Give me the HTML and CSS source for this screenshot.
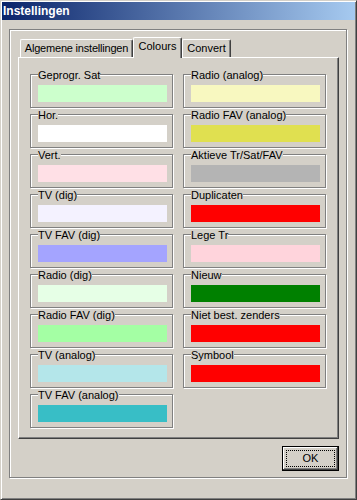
FILE: index.html
```html
<!DOCTYPE html>
<html lang="nl">
  <head>
    <link rel="stylesheet" href="styles.css">
  </head>
  <body>
    <div class="window">
      <div class="titlebar">Instellingen</div>
      <div class="client">
        <div class="frame">
          <div class="tabs">
            <div class="tab tab-general">Algemene instellingen</div>
            <div class="tab tab-colours active">Colours</div>
            <div class="tab tab-convert">Convert</div>
          </div>

          <div class="page">
            <div class="column">
              <div class="group"><span class="caption">Geprogr. Sat</span><div class="swatch sat"></div></div>
              <div class="group"><span class="caption">Hor.</span><div class="swatch hor"></div></div>
              <div class="group"><span class="caption">Vert.</span><div class="swatch vert"></div></div>
              <div class="group"><span class="caption">TV (dig)</span><div class="swatch tv-dig"></div></div>
              <div class="group"><span class="caption">TV FAV (dig)</span><div class="swatch tv-fav-dig"></div></div>
              <div class="group"><span class="caption">Radio (dig)</span><div class="swatch radio-dig"></div></div>
              <div class="group"><span class="caption">Radio FAV (dig)</span><div class="swatch radio-fav-dig"></div></div>
              <div class="group"><span class="caption">TV (analog)</span><div class="swatch tv-analog"></div></div>
              <div class="group"><span class="caption">TV FAV (analog)</span><div class="swatch tv-fav-analog"></div></div>
            </div>
            <div class="column">
              <div class="group"><span class="caption">Radio (analog)</span><div class="swatch radio-analog"></div></div>
              <div class="group"><span class="caption">Radio FAV (analog)</span><div class="swatch radio-fav-analog"></div></div>
              <div class="group"><span class="caption">Aktieve Tr/Sat/FAV</span><div class="swatch active-tr"></div></div>
              <div class="group"><span class="caption">Duplicaten</span><div class="swatch duplicates"></div></div>
              <div class="group"><span class="caption">Lege Tr</span><div class="swatch empty-tr"></div></div>
              <div class="group"><span class="caption">Nieuw</span><div class="swatch new"></div></div>
              <div class="group"><span class="caption">Niet best. zenders</span><div class="swatch missing"></div></div>
              <div class="group"><span class="caption">Symbool</span><div class="swatch symbol"></div></div>
            </div>
          </div>

          <div class="actions">
            <button class="btn default"><span>OK</span></button>
          </div>
        </div>
      </div>
    </div>
  </body>
</html>
```

FILE: styles.css
```css
/* basis */
body {
  margin: 0;
  background: #d4d0c8;
  font-family: "Liberation Sans", Arial, sans-serif;
  font-size: 11px;
  color: #000;
}

.window {
  width: 357px;
  height: 500px;
  box-sizing: border-box;
  border: 1px solid;
  border-color: #d4d0c8 #404040 #404040 #d4d0c8;
  box-shadow: inset 1px 1px #fff, inset -1px -1px #808080;
  padding: 1px;
  background: #d4d0c8;
}

.titlebar {
  height: 18px;
  padding-left: 1px;
  background: linear-gradient(to right, #0a246a, #a6caf0);
  color: #fff;
  font-weight: bold;
  font-size: 12px;
  line-height: 18px;
}

/* kader rond tabs + knoppen */
.frame {
  width: 338px;
  height: 449px;
  box-sizing: border-box;
  margin: 9px 0 0 7px;
  padding: 7px 0 0 8px;
  border: 1px solid #808080;
  box-shadow: inset 1px 1px #fff, 1px 1px #fff;
}

/* tabs */
.tabs {
  display: flex;
  align-items: flex-end;
  height: 20px;
  padding-left: 2px;
}

.tab {
  height: 18px;
  box-sizing: border-box;
  border: 1px solid;
  border-bottom: none;
  border-color: #fff #404040 #404040 #fff;
  border-radius: 2px 2px 0 0;
  box-shadow: inset -1px 0 #808080;
  text-align: center;
  line-height: 17px;
  white-space: nowrap;
}

.tab-general {
  width: 113px;
  letter-spacing: -0.2px;
}
.tab-colours { width: 49px; }
.tab-convert { width: 49px; }

.tab.active {
  position: relative;
  z-index: 1;
  height: 21px;
  margin-bottom: -1px;
  background: #d4d0c8;
  line-height: 17px;
}

.page {
  display: flex;
  align-items: flex-start;
  gap: 10px;
  width: 321px;
  height: 382px;
  box-sizing: border-box;
  padding: 16px 0 0 11px;
  border: 1px solid;
  border-color: #fff #404040 #404040 #fff;
  box-shadow: inset -1px -1px #808080;
}

.column {
  display: flex;
  flex-direction: column;
  gap: 6px;
}

/* groupbox met kleur */
.group {
  width: 143px;
  height: 34px;
  box-sizing: border-box;
  padding: 0 5px 0 7px;
  border: 1px solid #808080;
  box-shadow: inset 1px 1px #fff, 1px 1px #fff;
  line-height: 13px;
}

.caption {
  display: block;
  width: fit-content;
  margin-top: -6px;
  background: #d4d0c8;
  white-space: nowrap;
}

.swatch {
  width: 129px;
  height: 17px;
  margin-top: 3px;
}

.sat { background: #ccffcc; }
.hor { background: #ffffff; }
.vert { background: #ffe0e6; }
.tv-dig { background: #f4f2ff; }
.tv-fav-dig { background: #a4a4ff; }
.radio-dig { background: #e6ffe6; }
.radio-fav-dig { background: #a4ffa4; }
.tv-analog { background: #b4e6ea; }
.tv-fav-analog { background: #38bec6; }
.radio-analog { background: #f8f8c0; }
.radio-fav-analog { background: #e0e050; }
.active-tr { background: #b4b4b4; }
.duplicates { background: #ff0000; }
.empty-tr { background: #ffd4dc; }
.new { background: #008000; }
.missing { background: #ff0000; }
.symbol { background: #ff0000; }

/* knoppen */
.actions {
  display: flex;
  justify-content: flex-end;
  width: 321px;
  margin-top: 7px;
}

.btn {
  appearance: none;
  width: 57px;
  height: 25px;
  box-sizing: border-box;
  padding: 3px;
  margin: 0;
  border: 1px solid #000;
  background: #d4d0c8;
  box-shadow: inset -1px -1px #404040, inset 1px 1px #fff, inset -2px -2px #808080;
  font-family: inherit;
  font-size: 11px;
  color: #000;
}

.btn span {
  display: block;
  height: 100%;
  box-sizing: border-box;
  border: 1px dotted #000;
  line-height: 15px;
}
```
